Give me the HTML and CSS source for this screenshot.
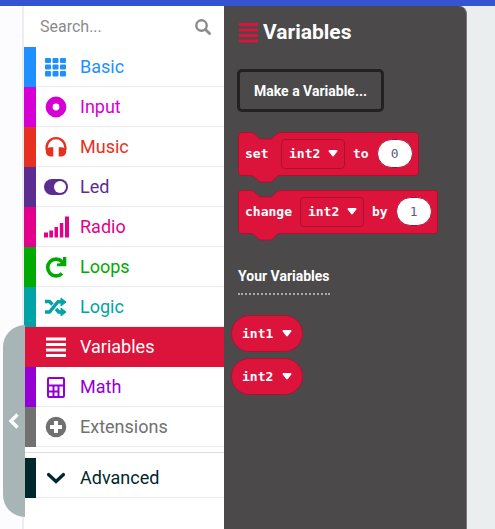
FILE: index.html
```html
<!DOCTYPE html>
<html lang="en">
<head>
<meta charset="utf-8">
<title>Block editor</title>
<link rel="stylesheet" href="styles.css">
</head>
<body>
<header class="topbar"></header>
<main class="editor">
  <aside class="gutter">
    <button class="collapse" type="button" aria-label="Collapse">
      <svg width="12" height="18" viewBox="0 0 12 18"><path d="M9.500 2.500 3 9l6.500 6.500" fill="none" stroke="#fff" stroke-width="3.400"/></svg>
    </button>
  </aside>
  <nav class="toolbox">
    <label class="search">
      <input type="search" placeholder="Search..." aria-label="Search">
      <svg width="16" height="16" viewBox="0 0 16 16"><circle cx="6.500" cy="6.500" r="5.200" fill="none" stroke="#8b8b8b" stroke-width="2.400"/><path d="m10.500 10.500 4 4" stroke="#8b8b8b" stroke-width="2.800" stroke-linecap="round"/></svg>
    </label>
    <a class="row basic" href="#basic">
      <svg width="24" height="24" viewBox="0 0 24 24" fill="currentColor"><rect x="1" y="3" width="6" height="5" rx="1"/><rect x="8.500" y="3" width="6" height="5" rx="1"/><rect x="16" y="3" width="6" height="5" rx="1"/><rect x="1" y="9.500" width="6" height="5" rx="1"/><rect x="8.500" y="9.500" width="6" height="5" rx="1"/><rect x="16" y="9.500" width="6" height="5" rx="1"/><rect x="1" y="16" width="6" height="5.500" rx="1"/><rect x="8.500" y="16" width="6" height="5.500" rx="1"/><rect x="16" y="16" width="6" height="5.500" rx="1"/></svg>
      <span>Basic</span></a>
    <a class="row input" href="#input">
      <svg width="24" height="24" viewBox="0 0 24 24"><circle cx="12" cy="12" r="6.900" fill="none" stroke="currentColor" stroke-width="7"/></svg>
      <span>Input</span></a>
    <a class="row music" href="#music">
      <svg width="24" height="24" viewBox="0 0 24 24"><path d="M2.600 15V12.500a9.400 9.400 0 0 1 18.800 0V15" fill="none" stroke="currentColor" stroke-width="2.400"/><path d="M9.300 12.200V21.500H7C3.500 21.500 1.800 19 1.800 16.500S3.500 12.200 7 12.200zM14.700 12.200V21.500H17c3.500 0 5.200-2.500 5.200-5s-1.700-4.300-5.200-4.300z" fill="currentColor"/></svg>
      <span>Music</span></a>
    <a class="row led" href="#led">
      <svg width="24" height="24" viewBox="0 0 24 24"><rect y="4" width="24" height="16" rx="8" fill="currentColor"/><circle cx="16" cy="12" r="6" fill="#fff"/></svg>
      <span>Led</span></a>
    <a class="row radio" href="#radio">
      <svg width="26" height="24" viewBox="0 0 26 24" fill="currentColor"><path d="M0 17.500h4v5H0zM5.300 15.500h3.700v7H5.300zM10.500 12h3.500v10.500h-3.500zM15.800 8h3.500v14.500h-3.500zM21 1.500h4v21h-4z"/></svg>
      <span>Radio</span></a>
    <a class="row loops" href="#loops">
      <svg width="24" height="24" viewBox="0 0 24 24"><path d="M18 6.500A8.400 8.400 0 1 0 18 18.500" fill="none" stroke="currentColor" stroke-width="3.600"/><path d="M22.300 2v9.200H13V8.500l3-.3 3-3.200V2z" fill="currentColor"/></svg>
      <span>Loops</span></a>
    <a class="row logic" href="#logic">
      <svg width="24" height="24" viewBox="0 0 24 24"><path d="M1 6.500h4.500l3 3M1 17h4.500L14 6.700h3.500M12 14l2.700 3h3" fill="none" stroke="currentColor" stroke-width="3.400"/><path d="M17 3 22 7l-5 4zM17 13l5 4-5 4z" fill="currentColor" stroke="currentColor"/></svg>
      <span>Logic</span></a>
    <a class="row variables" href="#variables" aria-current="true">
      <svg width="24" height="24" viewBox="0 0 24 24" fill="currentColor"><path d="M2 2.500h20v3H2zM2 8h20v3H2zM2 13.500h20v3H2zM2 19h20v3H2z"/></svg>
      <span>Variables</span></a>
    <a class="row math" href="#math">
      <svg width="24" height="24" viewBox="0 0 24 24"><g fill="none" stroke="currentColor" stroke-width="2"><rect x="4" y="3" width="16" height="19" rx="1"/><path d="M4 10.500h16M9.500 11v11M14.500 11v11M4 16.500h11"/></g></svg>
      <span>Math</span></a>
    <a class="row extensions" href="#extensions">
      <svg width="24" height="24" viewBox="0 0 24 24"><circle cx="12" cy="12" r="10.300" fill="currentColor"/><path d="M12 6v12M6 12h12" stroke="#fff" stroke-width="4"/></svg>
      <span>Extensions</span></a>
    <hr class="divider">
    <a class="row advanced" href="#advanced">
      <svg width="24" height="24" viewBox="0 0 24 24"><path d="m4.500 8.500 7.500 7 7.500-7" fill="none" stroke="currentColor" stroke-width="3.200" stroke-linecap="round"/></svg>
      <span>Advanced</span></a>
  </nav>
  <section class="flyout">
    <h1 class="title">
      <svg width="20" height="20" viewBox="0 0 20 20" fill="#dc143c"><path d="M1 0h19v3H1zM1 5.500h19v3H1zM1 11h19v3H1zM1 16.500h19v3H1z"/></svg>
      <span>Variables</span>
    </h1>
    <button class="make" type="button">Make a Variable...</button>
    <div class="blocks">
      <div class="block">
        <svg class="shape" width="182" height="52" viewBox="0 0 182 52"><path d="M.5 4a3.500 3.500 0 0 1 3.500-3.500h8c3 0 4 1 5 2l3 3c1 1 2 1.500 4 1.500h7c2 0 3-.5 4-1.500l3-3c1-1 2-2 5-2h134a3.500 3.500 0 0 1 3.500 3.500v36a3.500 3.500 0 0 1-3.500 3.500H43c-3 0-4 1-5 2l-3 3c-1 1-2 1.500-4 1.500h-7c-2 0-3-.5-4-1.500l-3-3c-1-1-2-2-5-2H4A3.500 3.500 0 0 1 .5 40z"/></svg>
        <span class="word">set</span>
        <span class="picker"><select aria-label="Variable to set"><option>int2</option></select><svg class="arrow" width="10" height="7" viewBox="0 0 10 7"><path d="M1.500 1h7L5 5.500z"/></svg></span>
        <span>to</span>
        <input class="number" type="text" value="0" aria-label="Value">
      </div>
      <div class="block">
        <svg class="shape" width="201" height="52" viewBox="0 0 201 52"><path d="M.5 4a3.500 3.500 0 0 1 3.500-3.500h8c3 0 4 1 5 2l3 3c1 1 2 1.500 4 1.500h7c2 0 3-.5 4-1.500l3-3c1-1 2-2 5-2h153a3.500 3.500 0 0 1 3.500 3.500v36a3.500 3.500 0 0 1-3.500 3.500H43c-3 0-4 1-5 2l-3 3c-1 1-2 1.500-4 1.500h-7c-2 0-3-.5-4-1.500l-3-3c-1-1-2-2-5-2H4A3.500 3.500 0 0 1 .5 40z"/></svg>
        <span class="word">change</span>
        <span class="picker"><select aria-label="Variable to change"><option>int2</option></select><svg class="arrow" width="10" height="7" viewBox="0 0 10 7"><path d="M1.500 1h7L5 5.500z"/></svg></span>
        <span>by</span>
        <input class="number" type="text" value="1" aria-label="Amount">
      </div>
    </div>
    <h2 class="subtitle">Your Variables</h2>
    <div class="pills">
      <button class="pill" type="button">int1<svg width="10" height="7" viewBox="0 0 10 7"><path d="M1.500 1h7L5 5.500z"/></svg></button>
      <button class="pill" type="button">int2<svg width="10" height="7" viewBox="0 0 10 7"><path d="M1.500 1h7L5 5.500z"/></svg></button>
    </div>
  </section>
</main>
</body>
</html>
```
FILE: styles.css
```css
* { box-sizing: border-box; }
body {
  margin: 0;
  min-height: 100vh;
  display: flex;
  flex-direction: column;
  background: #eaeeef;
  font-family: Roboto, sans-serif;
}
.topbar { height: 6px; background: #3454d1; }
.editor { flex: 1; display: flex; }

.gutter {
  position: relative;
  width: 24px;
  background: #fcfcff;
  border-right: 2px solid #eeeef1;
}
.collapse {
  position: absolute;
  top: 319px;
  left: 3px;
  width: 22px;
  height: 192px;
  padding: 0 0 0 5px;
  display: flex;
  align-items: center;
  border: 0;
  border-radius: 22px 0 0 22px;
  background: #a8b5b6;
  z-index: 1;
}

.toolbox { width: 200px; background: #fff; }
.search {
  display: flex;
  align-items: center;
  height: 41px;
  padding: 0 13px 0 16px;
}
.search input {
  flex: 1;
  min-width: 0;
  padding: 0;
  border: 0;
  outline: 0;
  background: none;
  font: 16px Roboto, sans-serif;
}
.search input::placeholder { color: #8b8b8b; }
.row {
  display: flex;
  align-items: center;
  height: 40px;
  padding-left: 8px;
  border-left: 12px solid var(--stripe);
  color: var(--stripe);
  background: linear-gradient(#ececec, #ececec) bottom / 100% 1px no-repeat;
  font-size: 18px;
  text-decoration: none;
}
.row svg { flex: none; }
.row span {
  margin-left: auto;
  width: 144px;
  padding-bottom: 2px;
}
.basic { --stripe: #1e90ff; }
.input { --stripe: #d400d4; }
.music { --stripe: #e63022; }
.led { --stripe: #5c2d91; }
.radio { --stripe: #e3008c; }
.loops { --stripe: #00aa00; }
.logic { --stripe: #00a4a6; }
.variables {
  --stripe: #dc143c;
  color: #fff;
  background: #dc143c;
}
.math { --stripe: #9400d3; }
.extensions { --stripe: #717171; }
.advanced { --stripe: #00272b; }
.divider { margin: 5px 0; border: 0; height: 1px; background: #ddd; }

.flyout {
  width: 243px;
  padding: 12px 14px;
  border-right: 1px solid #777;
  border-radius: 0 8px 0 0;
  background: #4b4949;
  color: #fff;
}
.title {
  display: flex;
  align-items: center;
  gap: 5px;
  margin: 0;
  font-size: 21px;
  line-height: 28px;
}
.title svg { margin-top: 2px; }
.make {
  display: block;
  height: 43px;
  margin: 23px 0 20px -1px;
  padding: 0 14px;
  border: 3px solid #222;
  border-radius: 5px;
  background: none;
  color: #fff;
  font: bold 14px Roboto, sans-serif;
}
.blocks { display: flex; flex-direction: column; align-items: flex-start; gap: 14px; }
.block, .pill, .block select, .number {
  font: bold 13px "DejaVu Sans Mono", monospace;
  color: #fff;
}
.block {
  position: relative;
  display: flex;
  align-items: center;
  gap: 8px;
  height: 43px;
  padding: 0 7px;
}
.block + .block { margin-top: 1px; }
.block > * { position: relative; }
.block .shape {
  position: absolute;
  top: 0;
  left: 0;
  fill: #dc143c;
  stroke: #b01030;
}
.word { min-width: 28px; }
.picker { display: flex; align-items: center; }
.block select {
  appearance: none;
  width: 64px;
  height: 30px;
  padding: 0 7px;
  border: 1px solid #b01030;
  border-radius: 4px;
  background: none;
}
.arrow { position: absolute; right: 7px; pointer-events: none; }
.arrow path, .pill path {
  fill: #fff;
  stroke: #fff;
  stroke-width: 2;
  stroke-linejoin: round;
}
.number {
  width: 36px;
  height: 29px;
  padding: 0;
  border: 1px solid #b01030;
  border-radius: 15px;
  background: #fff;
  color: #575e75;
  font-weight: normal;
  text-align: center;
}
.subtitle {
  width: fit-content;
  margin: 33px 0 0;
  padding-bottom: 7px;
  border-bottom: 2px dotted #aaa;
  font-size: 14px;
  line-height: 20px;
}
.pills {
  display: flex;
  flex-direction: column;
  gap: 6px;
  margin: 20px 0 0 -7px;
}
.pill {
  display: flex;
  align-items: center;
  justify-content: space-between;
  width: 72px;
  height: 37px;
  padding: 0 10px;
  border: 1px solid #b01030;
  border-radius: 19px;
  background: #dc143c;
}
```
